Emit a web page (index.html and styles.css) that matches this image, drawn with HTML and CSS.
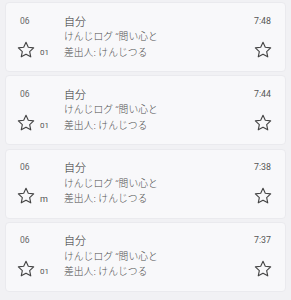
FILE: index.html
```html
<!DOCTYPE html>
<html lang="ja">
<head>
<meta charset="utf-8">
<link rel="stylesheet" href="styles.css">
</head>
<body>
<div class="list">
  <div class="card">
    <div class="left">
      <div class="num">06</div>
      <div class="star-row">
        <svg class="star" viewBox="0 0 24 24"><path d="M12 2.8l2.75 5.9 6.45.75-4.8 4.4 1.3 6.35L12 17l-5.7 3.2 1.3-6.35-4.8-4.4 6.45-.75z"/></svg>
        <span class="sub">01</span>
      </div>
    </div>
    <div class="mid">
      <div class="from">自分</div>
      <div class="line">けんじログ “問い心と</div>
      <div class="line">差出人: けんじつる</div>
    </div>
    <div class="right">
      <div class="time">7:48</div>
      <svg class="star" viewBox="0 0 24 24"><path d="M12 2.8l2.75 5.9 6.45.75-4.8 4.4 1.3 6.35L12 17l-5.7 3.2 1.3-6.35-4.8-4.4 6.45-.75z"/></svg>
    </div>
  </div>
  <div class="card">
    <div class="left">
      <div class="num">06</div>
      <div class="star-row">
        <svg class="star" viewBox="0 0 24 24"><path d="M12 2.8l2.75 5.9 6.45.75-4.8 4.4 1.3 6.35L12 17l-5.7 3.2 1.3-6.35-4.8-4.4 6.45-.75z"/></svg>
        <span class="sub">01</span>
      </div>
    </div>
    <div class="mid">
      <div class="from">自分</div>
      <div class="line">けんじログ “問い心と</div>
      <div class="line">差出人: けんじつる</div>
    </div>
    <div class="right">
      <div class="time">7:44</div>
      <svg class="star" viewBox="0 0 24 24"><path d="M12 2.8l2.75 5.9 6.45.75-4.8 4.4 1.3 6.35L12 17l-5.7 3.2 1.3-6.35-4.8-4.4 6.45-.75z"/></svg>
    </div>
  </div>
  <div class="card">
    <div class="left">
      <div class="num">06</div>
      <div class="star-row">
        <svg class="star" viewBox="0 0 24 24"><path d="M12 2.8l2.75 5.9 6.45.75-4.8 4.4 1.3 6.35L12 17l-5.7 3.2 1.3-6.35-4.8-4.4 6.45-.75z"/></svg>
        <span class="sub m">m</span>
      </div>
    </div>
    <div class="mid">
      <div class="from">自分</div>
      <div class="line">けんじログ “問い心と</div>
      <div class="line">差出人: けんじつる</div>
    </div>
    <div class="right">
      <div class="time">7:38</div>
      <svg class="star" viewBox="0 0 24 24"><path d="M12 2.8l2.75 5.9 6.45.75-4.8 4.4 1.3 6.35L12 17l-5.7 3.2 1.3-6.35-4.8-4.4 6.45-.75z"/></svg>
    </div>
  </div>
  <div class="card">
    <div class="left">
      <div class="num">06</div>
      <div class="star-row">
        <svg class="star" viewBox="0 0 24 24"><path d="M12 2.8l2.75 5.9 6.45.75-4.8 4.4 1.3 6.35L12 17l-5.7 3.2 1.3-6.35-4.8-4.4 6.45-.75z"/></svg>
        <span class="sub">01</span>
      </div>
    </div>
    <div class="mid">
      <div class="from">自分</div>
      <div class="line">けんじログ “問い心と</div>
      <div class="line">差出人: けんじつる</div>
    </div>
    <div class="right">
      <div class="time">7:37</div>
      <svg class="star" viewBox="0 0 24 24"><path d="M12 2.8l2.75 5.9 6.45.75-4.8 4.4 1.3 6.35L12 17l-5.7 3.2 1.3-6.35-4.8-4.4 6.45-.75z"/></svg>
    </div>
  </div>
</div>
</body>
</html>
```
FILE: styles.css
```css
html, body {
  margin: 0;
  padding: 0;
  background: #f1f1f4;
  font-family: "Noto Sans", "Noto Sans CJK JP", sans-serif;
}
.list {
  display: flex;
  flex-direction: column;
  gap: 3.3px;
  padding: 2px 5px 0 5px;
}
.card {
  box-sizing: border-box;
  height: 70px;
  background: #f8f8fa;
  border: 1px solid #eaeaee;
  border-radius: 4px;
  display: flex;
  padding: 10.5px 13px 0 10px;
}
.left {
  width: 48px;
  display: flex;
  flex-direction: column;
  justify-content: space-between;
  height: 46px;
}
.num {
  font-family: Roboto, "Noto Sans", sans-serif;
  font-size: 8.5px;
  line-height: 15.5px;
  color: #666;
  padding-left: 4px;
}
.star-row {
  display: flex;
  align-items: flex-end;
  gap: 4px;
}
.sub {
  font-family: Roboto, "Noto Sans", sans-serif;
  font-size: 8px;
  line-height: 10px;
  color: #555;
  margin-bottom: 2px;
}
.sub.m {
  font-size: 9px;
}
.star {
  width: 20px;
  height: 20px;
  fill: none;
  stroke: #444;
  stroke-width: 1.35;
  stroke-linejoin: round;
  display: block;
}
.mid {
  flex: 1;
  display: flex;
  flex-direction: column;
}
.from {
  font-size: 11px;
  line-height: 15.5px;
  color: #2d2d2d;
  font-weight: 300;
}
.line {
  font-size: 9.8px;
  line-height: 15.5px;
  color: #4d4d4d;
  white-space: nowrap;
  font-weight: 300;
}
.right {
  display: flex;
  flex-direction: column;
  align-items: flex-end;
  justify-content: space-between;
  height: 46px;
}
.time {
  font-family: Roboto, "Noto Sans", sans-serif;
  font-size: 8.8px;
  line-height: 15.5px;
  color: #555;
  padding-right: 1px;
}
.right .star {
  margin-right: -1px;
}
```
